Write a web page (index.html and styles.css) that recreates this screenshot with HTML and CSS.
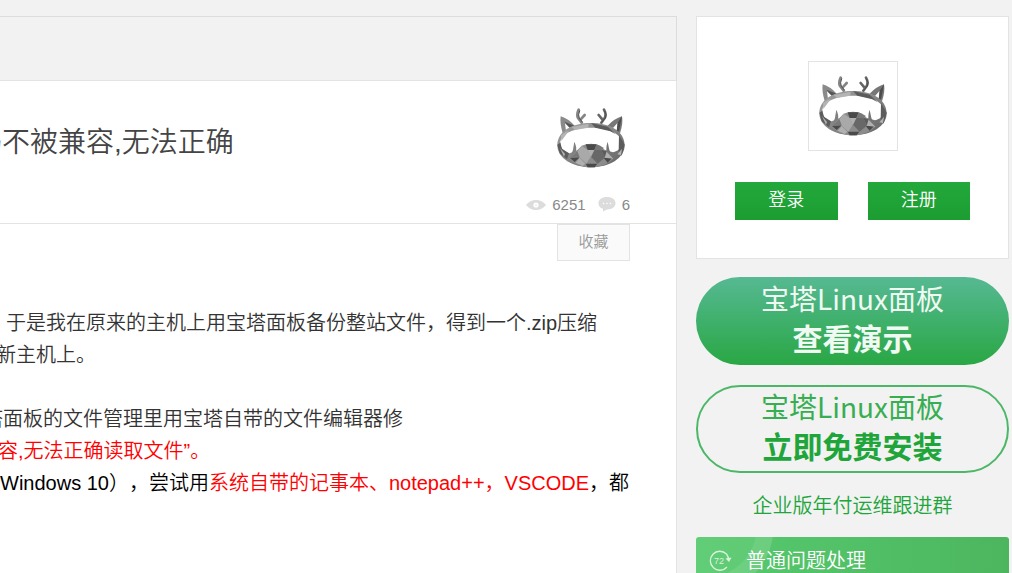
FILE: index.html
```html
<!DOCTYPE html>
<html lang="zh-CN">
<head>
<meta charset="utf-8">
<meta name="viewport" content="width=device-width, initial-scale=1">
<title>宝塔面板</title>
<link rel="stylesheet" href="styles.css">
</head>
<body>
<svg class="defs" aria-hidden="true">
  <defs>
    <linearGradient id="metal" x1="0" y1="0" x2="1" y2="1">
      <stop offset="0" stop-color="#a2a2a2"/>
      <stop offset=".5" stop-color="#858585"/>
      <stop offset="1" stop-color="#636363"/>
    </linearGradient>
    <symbol id="boar" viewBox="36 38 208 180">
      <path fill="#8a8a8a" d="M49 63Q72 70 91 91L76 97 62 84 65 108 55 113Q46 84 49 63Z"/>
      <path fill="#555" d="M60 79L91 91 76 97Z"/>
      <path fill="#777" d="M233 63Q210 70 190 91L206 98 220 82 217 108 227 114Q237 84 233 63Z"/>
      <path fill="#4c4c4c" d="M233 63L224 108 217 108 220 82Z"/>
      <g fill="none" stroke-linecap="round" stroke-linejoin="round">
        <path stroke="#858585" stroke-width="8" d="M103 43Q96 58 101 68L112 82M121 59L109 72"/>
        <path stroke="#666" stroke-width="8" d="M179 43Q187 57 181 68L171 82M163 59L174 72"/>
        <path stroke="#4e4e4e" stroke-width="3" d="M106 46Q100 59 105 69L114 80M181 47Q189 58 183 68L173 80"/>
      </g>
      <path fill="url(#metal)" fill-rule="evenodd" d="M140 83C195 83 241 107 241 150C241 189 195 216 140 216C85 216 39 189 39 150C39 107 85 83 140 83ZM140 97C90 97 48 115 48 143C48 159 59 170 76 174L110 160 170 160 206 171C221 168 232 158 232 141C232 115 190 97 140 97Z"/>
      <path fill="#5c5c5c" d="M140 83L153 97 198 108 214 117 190 94ZM39 148L48 142 53 160 74 174 68 192 46 174ZM224 119L241 148 232 181 223 168Z"/>
      <path fill="#b4b4b4" d="M82 95L133 85 132 97 92 104ZM50 119L65 109 74 106 51 137ZM47 158L62 176 59 184ZM219 177L233 160 230 179Z"/>
      <path fill="#808080" d="M90 139Q98 155 95 169L78 185Q88 164 90 139Z"/>
      <path fill="#747474" d="M190 139Q184 157 187 169L202 185Q193 161 190 139Z"/>
      <path fill="#8c8c8c" d="M74 190L112 151Q140 139 168 151L207 190Q181 216 140 216T74 190Z"/>
      <path fill="#4a4a4a" d="M124 147L157 147 150 164 130 164ZM77 188L106 186 91 200ZM124 205L159 205 151 216 130 216ZM178 188L204 187 190 202Z"/>
      <path fill="#a9a9a9" d="M112 151L130 164 140 183 126 205 105 186 99 168Z"/>
      <path fill="#686868" d="M150 164L171 163 181 187 160 205 140 184Z"/>
      <path fill="#787878" d="M157 147L179 158 171 164 150 164ZM91 176L99 168 106 186 77 188Z"/>
      <path fill="#b0b0b0" d="M130 164L150 164 140 184ZM94 202L106 188 123 205 115 212ZM181 187L207 190 181 163Z"/>
      <path fill="#5c5c5c" d="M171 163L187 168 181 187Z"/>
    </symbol>
  </defs>
</svg>
<div class="page">
  <main class="thread">
    <div class="thread-bar"></div>
    <header class="thread-head">
      <div class="title-row">
        <h1 class="title">码不被兼容,无法正确</h1>
        <svg class="boar" role="img" aria-label="头像"><use href="#boar"/></svg>
      </div>
      <div class="stats">
        <span class="stat">
          <svg class="eye" viewBox="0 0 20 12" aria-hidden="true"><path fill="#dcdcdc" d="M0 6Q4 1 10 1T20 6Q16 11 10 11T0 6Z"/><circle cx="10" cy="6" r="2.600" fill="#fff"/><circle cx="10" cy="6.300" r="1" fill="#eee"/></svg>
          6251
        </span>
        <span class="stat">
          <svg class="bubble" viewBox="0 0 18 15" aria-hidden="true"><path fill="#dcdcdc" d="M9 0C14 0 17.500 2.500 17.500 6.200S14 12.400 9 12.400L5 14.500V11.700C2 11 .500 9 .500 6.200C.500 2.500 4 0 9 0Z"/><g fill="#fff"><circle cx="5.500" cy="6.500" r=".8"/><circle cx="9" cy="6.500" r=".8"/><circle cx="12.500" cy="6.500" r=".8"/></g></svg>
          6
        </span>
      </div>
    </header>
    <div class="tools"><button class="favorite" type="button">收藏</button></div>
    <article class="post">
      <p class="line line-a">于是我在原来的主机上用宝塔面板备份整站文件，得到一个.zip压缩</p>
      <p class="line line-b">新主机上。</p>
      <p class="line line-c spaced">塔面板的文件管理里用宝塔自带的文件编辑器修</p>
      <p class="line line-d red">容,无法正确读取文件”。</p>
      <p class="line black">Windows 10），尝试用<span class="red">系统自带的记事本、notepad++，VSCODE</span>，都</p>
    </article>
  </main>
  <aside class="side">
    <section class="login">
      <div class="avatar"><svg class="boar" role="img" aria-label="头像"><use href="#boar"/></svg></div>
      <div class="login-actions">
        <a class="btn" href="#login">登录</a>
        <a class="btn" href="#register">注册</a>
      </div>
    </section>
    <a class="pill pill-solid" href="#demo"><span>宝塔Linux面板</span><strong>查看演示</strong></a>
    <a class="pill pill-line" href="#install"><span>宝塔Linux面板</span><strong>立即免费安装</strong></a>
    <a class="group-link" href="#group">企业版年付运维跟进群</a>
    <a class="service" href="#service">
      <svg class="badge" viewBox="0 0 24 24" aria-hidden="true"><g fill="none" stroke="#d9f3de" stroke-width="1.300"><path d="M18.500 5A9.500 9.500 0 1 0 19 18"/><path d="M18.500 5A9.500 9.500 0 0 1 20.500 11"/></g><path fill="#d9f3de" d="M17.500 9.500L23.500 8.500 21 13Z"/><text x="6" y="15" class="badge-text">72</text></svg>
      <span>普通问题处理</span>
    </a>
  </aside>
</div>
</body>
</html>
```
FILE: styles.css
```css
* { box-sizing: border-box; }
body {
  margin: 0;
  background: #f2f2f2;
  color: #333;
  font-family: "Liberation Sans", "Noto Sans CJK SC", sans-serif;
  font-weight: 350;
  text-spacing-trim: space-all;
}
a { text-decoration: none; }
.defs { position: absolute; width: 0; height: 0; }
.page {
  display: flex;
  gap: 19px;
  height: 100vh;
  padding: 16px 3px 0 0;
  overflow: hidden;
}
.thread {
  flex: 1;
  min-width: 0;
  background: #fff;
  border-right: 1px solid #e3e3e3;
}
.thread-bar {
  height: 65px;
  margin-right: -1px;
  background: #f2f2f2;
  border: 1px solid #dcdcdc;
  border-bottom-color: #e3e3e3;
  border-left: 0;
}
.thread-head { border-bottom: 1px solid #e3e3e3; }
.title-row {
  display: flex;
  justify-content: space-between;
  padding: 27px 50px 0 0;
}
.title {
  margin: 0;
  color: #444;
  font-size: 28px;
  font-weight: 350;
  line-height: 70px;
  text-indent: -26px;
  white-space: nowrap;
}
.boar { display: block; width: 70px; height: 60px; }
.stats {
  display: flex;
  justify-content: flex-end;
  gap: 12px;
  padding: 16px 46px 8px 0;
  color: #888;
  font-size: 15px;
  line-height: 21px;
}
.stat { display: flex; align-items: center; gap: 6px; }
.eye { width: 20px; height: 12px; }
.bubble { width: 18px; height: 15px; }
.tools { display: flex; justify-content: flex-end; padding-right: 46px; }
.favorite {
  width: 73px;
  height: 37px;
  padding: 0 0 4px;
  background: #fafafa;
  border: 1px solid #e3e3e3;
  color: #999;
  font: inherit;
  font-size: 15px;
}
.post { padding-top: 46px; }
.line { margin: 0; font-size: 20px; line-height: 32px; white-space: nowrap; }
.line-a { padding-left: 6px; }
.line-b { text-indent: -4px; }
.line-c { text-indent: -17px; }
.line-d { text-indent: -2px; }
.spaced { margin-top: 32px; }
.black { color: #000; }
.red { color: #f00; }
.side { display: flex; flex: 0 0 313px; flex-direction: column; }
.login {
  padding: 44px 38px 38px;
  background: #fff;
  border: 1px solid #e3e3e3;
}
.avatar {
  display: grid;
  place-items: center;
  width: 90px;
  height: 90px;
  margin: 0 auto 31px;
  border: 1px solid #e3e3e3;
}
.login-actions { display: flex; gap: 30px; }
.btn {
  flex: 1;
  background: linear-gradient(#23a83c, #1c9d31);
  color: #fff;
  font-size: 18px;
  line-height: 36px;
  padding-bottom: 2px;
  text-align: center;
}
.pill {
  display: flex;
  flex: none;
  flex-direction: column;
  align-items: center;
  height: 88px;
  border-radius: 44px;
  font-family: "Noto Sans CJK SC", sans-serif;
  font-size: 28px;
  font-weight: 400;
  line-height: 39px;
}
.pill strong { font-size: 30px; font-weight: 700; }
.pill-solid {
  margin-top: 18px;
  padding-top: 2px;
  background: linear-gradient(#56b993, #29a744);
  color: #f0faf3;
}
.pill-line {
  margin-top: 20px;
  border: 2px solid #4db768;
  color: #37ae51;
}
.pill-line strong { color: #20a53a; }
.group-link {
  padding: 17px 0 15px;
  color: #20a53a;
  font-size: 20px;
  line-height: 32px;
  text-align: center;
}
.service {
  display: flex;
  flex: 0 0 64px;
  align-items: flex-start;
  gap: 14px;
  padding: 12px 12px;
  background:
    radial-gradient(circle at 10px -10px, #ffffff10 50px, #ffffff24 51px, #ffffff24 67px, transparent 68px),
    linear-gradient(90deg, #57ca6e, #4cb65f);
  border-radius: 3px;
  color: #fff;
  font-size: 20px;
  line-height: 24px;
}
.badge { width: 24px; height: 24px; }
.badge-text { fill: #d9f3de; font-size: 9px; font-weight: 400; }
```
